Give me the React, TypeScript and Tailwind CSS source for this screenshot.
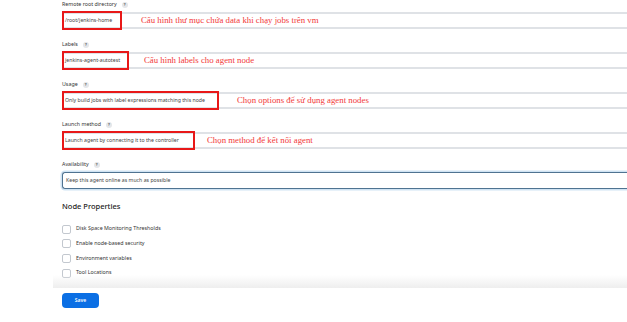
import React from "react";

const fields = [
  {
    label: "Remote root directory",
    value: "/root/jenkins-home",
    boxW: "w-[60px]",
    note: "Cấu hình thư mục chứa data khi chạy jobs trên vm",
    noteGap: "ml-[19px]",
  },
  {
    label: "Labels",
    value: "jenkins-agent-autotest",
    boxW: "w-[67px]",
    note: "Cấu hình labels cho agent node",
    noteGap: "ml-[15px]",
  },
  {
    label: "Usage",
    value: "Only build jobs with label expressions matching this node",
    boxW: "w-[157px]",
    note: "Chọn options để sử dụng agent nodes",
    noteGap: "ml-[18px]",
  },
  {
    label: "Launch method",
    value: "Launch agent by connecting it to the controller",
    boxW: "w-[133px]",
    note: "Chọn method để kết nối agent",
    noteGap: "ml-[12px]",
  },
];

const props = [
  "Disk Space Monitoring Thresholds",
  "Enable node-based security",
  "Environment variables",
  "Tool Locations",
];

function Help() {
  return (
    <span className="ml-[5px] inline-flex h-[6px] w-[6px] items-center justify-center rounded-full bg-[#e4e6e9] text-[4px] font-bold leading-none text-[#555]">
      ?
    </span>
  );
}

export default function App() {
  return (
    <div className="relative h-[322px] w-[627px] overflow-hidden bg-white font-['Noto_Sans',sans-serif] text-[#333]">
      <div className="pl-[62px]">
        {/* --- FIELDS --- */}
        {fields.map((f) => (
          <div key={f.label} className="mb-[11px] h-[29px]">
            <div className="flex h-[10px] items-center text-[5.3px] leading-none">
              {f.label}
              <Help />
            </div>
            <div className="mt-[2px] flex h-[17px] items-center border-y-2 border-[#dfe2e6]">
              <div
                className={`${f.boxW} -my-[2px] flex h-[19px] shrink-0 items-center border-2 border-[#e81818] pl-[1px] text-[5.2px] leading-none text-[#444] whitespace-nowrap`}
              >
                {f.value}
              </div>
              <span
                className={`${f.noteGap} font-['Liberation_Serif',serif] text-[8.8px] leading-none text-[#f23a3a] whitespace-nowrap`}
              >
                {f.note}
              </span>
            </div>
          </div>
        ))}

        {/* --- AVAILABILITY --- */}
        <div className="h-[29px]">
          <div className="flex h-[10px] items-center text-[5.3px] leading-none">
            Availability
            <Help />
          </div>
          <div className="mt-[2px] flex h-[17px] items-center rounded-l-[3px] border-y-[1.5px] border-l-[1.5px] border-[#4f7391] pl-[3px] text-[5.2px] leading-none text-[#444] shadow-[0_0_0_1.5px_#cfe3f3]">
            Keep this agent online as much as possible
          </div>
        </div>

        {/* --- NODE PROPERTIES --- */}
        <div className="mt-[13px] flex h-[10px] items-center text-[7.5px] font-medium leading-none text-[#222]">
          Node Properties
        </div>
        <div className="mt-[12px] flex flex-col gap-[4.7px]">
          {props.map((p) => (
            <div key={p} className="flex h-[10px] items-center">
              <span className="h-[9px] w-[9px] rounded-[2px] border border-[#c3c8cf] bg-white" />
              <span className="ml-[5px] text-[5.3px] leading-none text-[#333]">{p}</span>
            </div>
          ))}
        </div>
      </div>

      {/* --- BOTTOM BAR --- */}
      <div className="relative -mt-[3px] ml-[53px] h-[13px] bg-gradient-to-b from-white/0 to-[#eeeeee]" />
      <div className="pl-[62px] pt-[5px]">
        <button className="flex h-[15px] w-[37px] items-center justify-center rounded-[4px] bg-[#0b6fe4] text-[5px] font-semibold leading-none text-white">
          Save
        </button>
      </div>
    </div>
  );
}
